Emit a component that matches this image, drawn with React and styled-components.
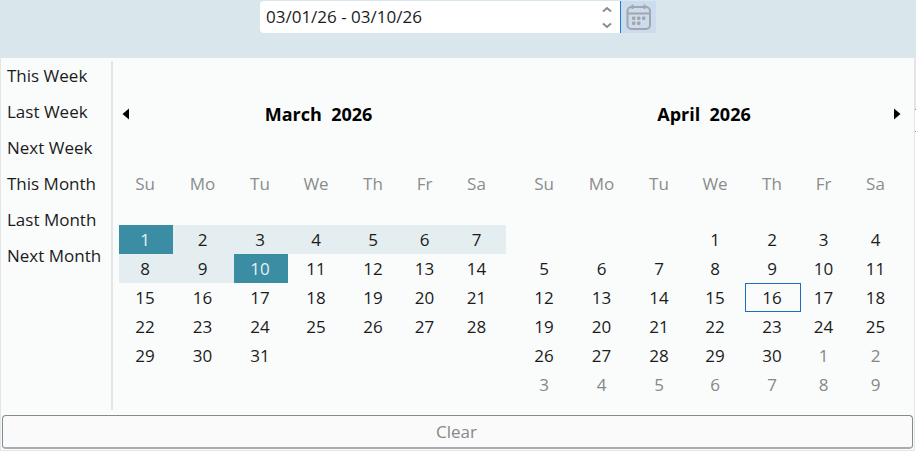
import React from "react";
import styled, { createGlobalStyle, css } from "styled-components";

const GlobalStyle = createGlobalStyle`
  *, *::before, *::after { box-sizing: border-box; }
  body {
    margin: 0;
    background: #fff;
    color: #1b1b1b;
    font-family: "Open Sans", "Noto Sans", sans-serif;
    font-size: 17px;
    line-height: 24px;
  }
  button, input { font: inherit; color: inherit; }
`;

const Page = styled.main`
  display: flow-root;
  min-height: 100vh;
  background:
    linear-gradient(#8c8c8c, #8c8c8c) right 109px / 1px 1px no-repeat,
    linear-gradient(#8c8c8c, #8c8c8c) right 131px / 1px 1px no-repeat,
    linear-gradient(#e4e4e8, #e4e4e8) right top / 2px 109px no-repeat,
    #fff;
  background-position: right 0 top 109px, right 0 top 131px, right 0 top 0;
`;

const Toolbar = styled.div`
  display: flex;
  justify-content: center;
  height: 57px;
  padding: 1px 0 24px;
  background: #d9e7ec;
`;

const DateField = styled.div`
  display: flex;
  width: 396px;
  max-width: 100%;
`;

const FieldBox = styled.div`
  display: flex;
  flex: 1;
  min-width: 0;
  padding-right: 6px;
  background: #fff;
  border-radius: 4px 0 0 4px;
`;

const RangeInput = styled.input`
  flex: 1;
  min-width: 0;
  padding: 0 0 0 6px;
  border: 0;
  outline: 0;
  background: transparent;
`;

const Spinner = styled.div`
  display: flex;
  flex-direction: column;
  width: 14px;
`;

const PlainButton = styled.button`
  display: flex;
  align-items: center;
  justify-content: center;
  padding: 0;
  border: 0;
  background: transparent;
`;

const SpinButton = styled(PlainButton)`
  flex: 1;
`;

const PickerButton = styled(PlainButton)`
  width: 36px;
  border-left: 1px solid #1e78d7;
  background: #cbdcee;
`;

const Popup = styled.section`
  margin-right: 1px;
  padding: 3px 1px 1px;
  border: 1px solid #e5e5e6;
  background: #fafcfb;
`;

const PopupBody = styled.div`
  display: flex;
`;

const Presets = styled.nav`
  display: flex;
  flex-direction: column;
  width: 111px;
  height: 349px;
  border-right: 2px solid #e4e6e6;
`;

const PresetButton = styled.button`
  height: 36px;
  padding: 0 0 6px 5px;
  border: 0;
  background: transparent;
  text-align: left;
  white-space: nowrap;
`;

const Months = styled.div`
  display: grid;
  grid-template-columns: 1fr 1fr;
  column-gap: 12px;
  flex: 1;
  padding: 39px 8px 0 6px;
`;

const MonthHeader = styled.header`
  display: flex;
  height: 28px;
  margin-bottom: 42px;
`;

const MonthTitle = styled.h2`
  flex: 1;
  margin: 0;
  color: #000;
  font-size: 18px;
  font-weight: 700;
  line-height: 28px;
  text-align: center;
  white-space: pre;
`;

const StepButton = styled(PlainButton)`
  width: ${(p) => (p.$wide ? 15 : 12)}px;
`;

const MonthTable = styled.table`
  display: block;
`;

const HeadGroup = styled.thead`
  display: block;
  margin-bottom: 27px;
`;

const DayGroup = styled.tbody`
  display: block;
`;

const WeekRow = styled.tr`
  display: grid;
  grid-template-columns: 54fr 61fr 54fr 58fr 56fr 47fr 57fr;
`;

const WeekdayCell = styled.th`
  height: 28px;
  padding: 0 2px 0 0;
  color: #8a8c8d;
  font-weight: 400;
  line-height: 28px;
`;

const DayCell = styled.td`
  height: 29px;
  padding: 0;
`;

const dayTones = {
  range: css`
    background: #e4edef;
  `,
  edge: css`
    background: #3b8da3;
    color: #e6f1f4;
  `,
  today: css`
    border: 1px solid #1c6cc4;
  `,
  outside: css`
    color: #858788;
  `,
};

const DayButton = styled.button`
  display: block;
  width: 100%;
  height: 29px;
  padding: 0 2px 0 0;
  border: 0;
  background: transparent;
  text-align: center;
  ${(p) => dayTones[p.$tone]}
`;

const ClearButton = styled.button`
  display: block;
  width: 100%;
  height: 34px;
  margin-top: 5px;
  padding: 0 2px 0 0;
  border: 1px solid #7f8b91;
  border-bottom: 2px solid #a3adb3;
  border-radius: 4px;
  background: #fafafa;
  color: #868889;
`;

const PRESETS = ["This Week", "Last Week", "Next Week", "This Month", "Last Month", "Next Month"];
const WEEKDAYS = ["Su", "Mo", "Tu", "We", "Th", "Fr", "Sa"];

function Chevron({ down }) {
  return (
    <svg width="10" height="7" viewBox="0 0 10 7" fill="none" stroke="#8c8c8c" strokeWidth="2" aria-hidden="true">
      <path d={down ? "M1 1.5 5 5l4-3.5" : "M1 5.5 5 2l4 3.5"} />
    </svg>
  );
}

function Triangle({ right }) {
  return (
    <svg width="7" height="12" viewBox="0 0 7 12" fill="#000" aria-hidden="true">
      <path d={right ? "M0 0.5 6.5 6 0 11.5z" : "M7 0.5 0.5 6 7 11.5z"} />
    </svg>
  );
}

function CalendarIcon() {
  return (
    <svg width="26" height="27" viewBox="0 0 26 27" fill="none" stroke="#a3a7ac" strokeWidth="2" aria-hidden="true">
      <rect x="1.5" y="3" width="22.5" height="22" rx="4" />
      <path d="M1.5 9.5h22.5" />
      <path d="M6.5 0.5v4.5M18.5 0.5v4.5" />
      <g fill="#a3a7ac" stroke="none">
        <rect x="6" y="12.5" width="3.4" height="3.4" rx="1" />
        <rect x="11" y="12.5" width="3.4" height="3.4" rx="1" />
        <rect x="16" y="12.5" width="3.4" height="3.4" rx="1" />
        <rect x="6" y="17.5" width="3.4" height="3.4" rx="1" />
        <rect x="11" y="17.5" width="3.4" height="3.4" rx="1" />
      </g>
    </svg>
  );
}

function buildWeeks({ offset, length, trailing }) {
  const days = [
    ...Array(offset).fill(null),
    ...Array.from({ length }, (_, i) => ({ day: i + 1 })),
    ...Array.from({ length: trailing }, (_, i) => ({ day: i + 1, outside: true })),
  ];
  const weeks = [];
  for (let i = 0; i < days.length; i += 7) weeks.push(days.slice(i, i + 7));
  return weeks;
}

function toneOf({ day, outside }, { range, today }) {
  if (outside) return "outside";
  if (range && (day === range[0] || day === range[1])) return "edge";
  if (range && day > range[0] && day < range[1]) return "range";
  if (day === today) return "today";
  return undefined;
}

const MARCH = { name: "March", offset: 0, length: 31, trailing: 0, range: [1, 10] };
const APRIL = { name: "April", offset: 3, length: 30, trailing: 9, today: 16 };

function Month({ month, previous, next }) {
  return (
    <section>
      <MonthHeader>
        {previous && (
          <StepButton type="button" aria-label="Previous month">
            <Triangle />
          </StepButton>
        )}
        <MonthTitle>{`${month.name}  2026`}</MonthTitle>
        {next && (
          <StepButton type="button" $wide aria-label="Next month">
            <Triangle right />
          </StepButton>
        )}
      </MonthHeader>
      <MonthTable aria-label={`${month.name} 2026`}>
        <HeadGroup>
          <WeekRow>
            {WEEKDAYS.map((name) => (
              <WeekdayCell key={name} scope="col">{name}</WeekdayCell>
            ))}
          </WeekRow>
        </HeadGroup>
        <DayGroup>
          {buildWeeks(month).map((week, row) => (
            <WeekRow key={row}>
              {week.map((cell, col) => (
                <DayCell key={col}>
                  {cell && (
                    <DayButton type="button" $tone={toneOf(cell, month)}>
                      {cell.day}
                    </DayButton>
                  )}
                </DayCell>
              ))}
            </WeekRow>
          ))}
        </DayGroup>
      </MonthTable>
    </section>
  );
}

export default function App() {
  return (
    <Page>
      <GlobalStyle />
      <Toolbar>
        <DateField>
          <FieldBox>
            <RangeInput aria-label="Date range" defaultValue="03/01/26 - 03/10/26" />
            <Spinner>
              <SpinButton type="button" aria-label="Increase">
                <Chevron />
              </SpinButton>
              <SpinButton type="button" aria-label="Decrease">
                <Chevron down />
              </SpinButton>
            </Spinner>
          </FieldBox>
          <PickerButton type="button" aria-label="Open calendar">
            <CalendarIcon />
          </PickerButton>
        </DateField>
      </Toolbar>
      <Popup>
        <PopupBody>
          <Presets aria-label="Quick ranges">
            {PRESETS.map((label) => (
              <PresetButton key={label} type="button">{label}</PresetButton>
            ))}
          </Presets>
          <Months>
            <Month month={MARCH} previous />
            <Month month={APRIL} next />
          </Months>
        </PopupBody>
        <ClearButton type="button">Clear</ClearButton>
      </Popup>
    </Page>
  );
}
